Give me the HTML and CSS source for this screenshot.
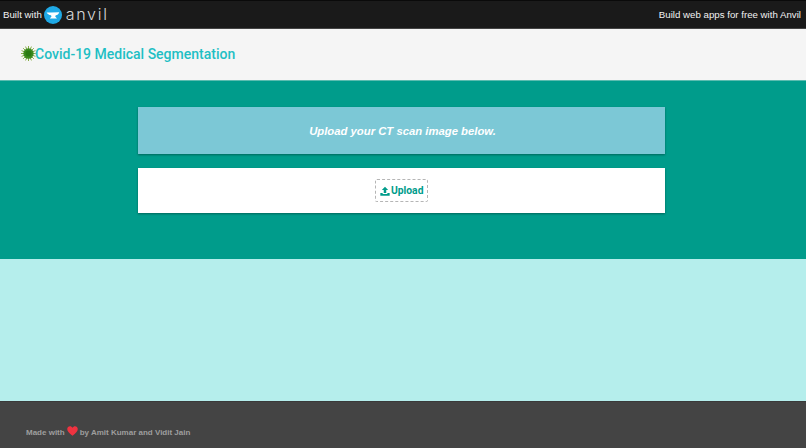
FILE: index.html
```html
<!DOCTYPE html>
<html lang="en">
<head>
<meta charset="utf-8">
<title>Covid-19 Medical Segmentation</title>
<link rel="stylesheet" href="styles.css">
</head>
<body>
<header class="topbar">
  <div class="built">
    <span>Built with</span>
    <svg class="anvil-icon" viewBox="0 0 18 18" width="18" height="18" aria-hidden="true">
      <circle cx="9" cy="9" r="9" fill="#1fa9e6"/>
      <path d="M2.600 6.400h4.200l8.400-.2c-.2 1.500-1.600 2.800-3.400 3l-.6 1.300 1.800 2H5.800l1.700-2-.5-1.300C5 8.800 3.300 8 2.600 6.400z" fill="#fff"/>
    </svg>
    <span class="wordmark">anvil</span>
  </div>
  <div class="promo">Build web apps for free with Anvil</div>
</header>
<nav class="navbar">
  <svg class="virus" viewBox="0 0 16 16" width="15" height="15" aria-hidden="true">
    <g stroke="#7fa83c" stroke-width="1">
      <path d="M8 0v16M0 8h16M2.300 2.300l11.400 11.400M13.700 2.300L2.300 13.700M4.900 .6l6.200 14.800M11.100 .6L4.900 15.400M.6 4.900l14.800 6.200M.6 11.100l14.800-6.200"/>
    </g>
    <circle cx="8" cy="8" r="5.500" fill="#3c8a1e"/>
    <circle cx="8" cy="8" r="3.200" fill="#2a7a12"/>
  </svg>
  <span class="title">Covid-19 Medical Segmentation</span>
</nav>
<main class="hero">
  <section class="card card-info">Upload your CT scan image below.</section>
  <section class="card card-upload">
    <button class="upload" type="button">
      <svg viewBox="0 0 12 12" width="10" height="10" aria-hidden="true">
        <path d="M6 .8L9.800 4.800H7.500V8.400H4.500V4.800H2.200zM.4 8.400h2.800V9.600h5.600V8.400h2.800v3.200H.4z" fill="#009c8b"/>
      </svg>
      <span>Upload</span>
    </button>
  </section>
</main>
<section class="band"></section>
<footer class="footer">
  <span>Made with</span>
  <svg class="heart" viewBox="0 0 12 11" width="11" height="10" aria-hidden="true">
    <path d="M6 10.800C2.500 8 .2 6 .2 3.400.2 1.500 1.600.2 3.200.2 4.400.2 5.400.9 6 1.900 6.600.9 7.600.2 8.800.2c1.600 0 3 1.300 3 3.200C11.800 6 9.500 8 6 10.800z" fill="#ef3340"/>
  </svg>
  <span>by Amit Kumar and Vidit Jain</span>
</footer>
</body>
</html>
```
FILE: styles.css
```css
* { box-sizing: border-box; }
html, body { margin: 0; padding: 0; }
body {
  width: 806px;
  height: 448px;
  overflow: hidden;
  display: flex;
  flex-direction: column;
  font-family: "Liberation Sans", Arial, sans-serif;
}
.topbar {
  height: 29px;
  flex: none;
  background: #1a1a1a;
  border-top: 1px solid #0a0a0a;
  border-bottom: 1px solid #444;
  color: #f2f2f2;
  font-size: 9.700px;
  display: flex;
  align-items: center;
  justify-content: space-between;
  padding: 0 5px 0 3px;
}
.built { display: flex; align-items: center; gap: 2px; }
.anvil-icon { flex: none; }
.wordmark {
  font-family: Inter, sans-serif;
  font-weight: 300;
  font-size: 16px;
  letter-spacing: 1.700px;
  line-height: 18px;
  color: #d8d8d8;
  margin: -2px 0 0 2px;
}
.navbar {
  height: 51px;
  flex: none;
  background: #f5f5f5;
  display: flex;
  align-items: center;
  padding: 0 0 0 21px;
}
.virus { flex: none; margin-right: -1px; margin-top: -2px; }
.title {
  font-family: Roboto, sans-serif;
  font-weight: 500;
  font-size: 14px;
  color: #1fbfc4;
  margin-top: -1px;
}
.hero {
  height: 179px;
  flex: none;
  background: #009c8b;
  border-top: 1px solid #5cbcb0;
  display: flex;
  flex-direction: column;
  align-items: flex-start;
  padding: 26px 0 0 138px;
  gap: 14px;
}
.card {
  width: 527px;
  display: flex;
  align-items: center;
  justify-content: center;
  box-shadow: 0 1px 2px rgba(0, 0, 0, .35);
}
.card-info {
  height: 47px;
  background: #7cc8d6;
  color: #fff;
  font-size: 11.300px;
  font-weight: 700;
  font-style: italic;
  padding-left: 2px;
}
.card-upload { height: 45px; background: #fff; }
.upload {
  display: flex;
  align-items: center;
  gap: 1px;
  height: 23px;
  width: 53px;
  padding: 0 0 0 4px;
  background: #fff;
  border: 1px dashed #b5b5b5;
  border-radius: 2px;
  color: #009c8b;
  font-family: Roboto, sans-serif;
  font-size: 10.300px;
  font-weight: 700;
}
.band { height: 142px; flex: none; background: #b5eeec; }
.footer {
  flex: 1;
  background: #444;
  border-top: 1px solid #3a3a3a;
  color: #9e9e9e;
  font-size: 8px;
  font-weight: 700;
  display: flex;
  align-items: center;
  gap: 2px;
  padding: 14px 0 0 26px;
}
.heart { flex: none; margin-top: -3px; }
```
